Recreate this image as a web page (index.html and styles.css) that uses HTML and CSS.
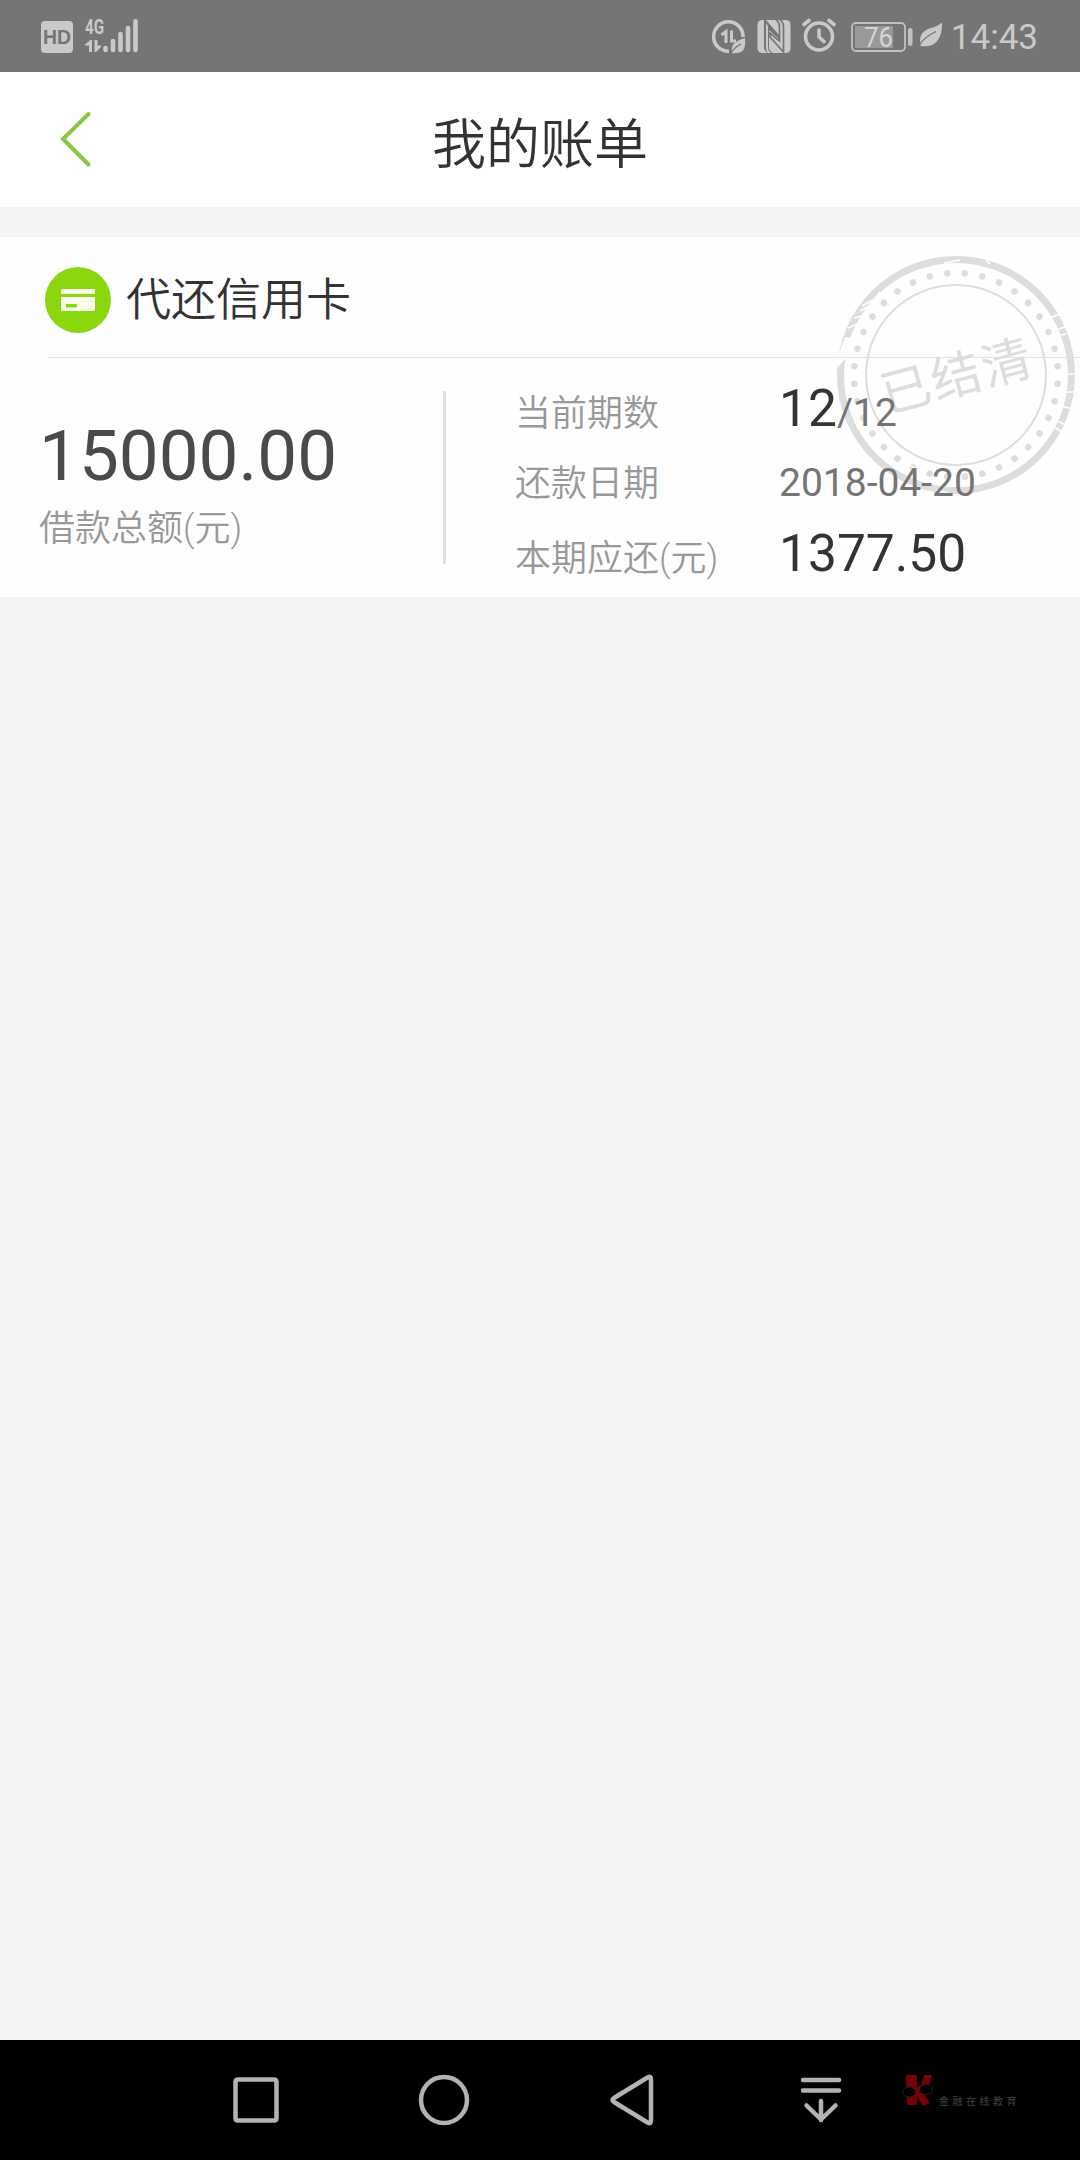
FILE: index.html
```html
<!DOCTYPE html>
<html lang="zh-CN">
<head>
  <meta charset="UTF-8">
  <meta name="viewport" content="width=device-width, initial-scale=1.0">
  <title>我的账单</title>
  <link rel="stylesheet" href="styles.css">
</head>
<body>
  <!-- 状态栏 -->
  <div class="status-bar">
    <div class="status-left">
      <svg class="icon-hd" width="32" height="32" viewBox="0 0 32 32">
        <rect width="32" height="32" rx="4" fill="#c9c9c9"/>
        <text x="16" y="23" text-anchor="middle" textLength="28" lengthAdjust="spacingAndGlyphs" class="hd-text">HD</text>
      </svg>
      <svg class="icon-signal" width="54" height="42" viewBox="0 -8 54 42">
        <text x="0" y="15" textLength="19" lengthAdjust="spacingAndGlyphs" class="net-text">4G</text>
        <path d="M4 33V26.500H0V25.500L5.500 21H7V33ZM9.500 21V33H11L16 28V26.500H12.500V21Z" fill="#c9c9c9"/>
        <path d="M20.500 29V31M28 22V31M35.500 15V31M43 9V31M50.500 2.300V31" stroke="#c9c9c9" stroke-width="4.600" stroke-linecap="round"/>
      </svg>
    </div>
    <div class="status-right">
      <svg class="icon-data" width="34" height="34" viewBox="0 0 34 34">
        <path d="M31 17A14.700 14.700 0 1 0 17 31.200" fill="none" stroke="#c9c9c9" stroke-width="3.600"/>
        <path d="M14 23V11.500L9.500 15M19.500 10.500V21H24" fill="none" stroke="#c9c9c9" stroke-width="3"/>
        <path d="M33 18C34 29 31 33 24 33L20.500 33.500C18 26 22 21 33 18Z" fill="#c9c9c9"/>
        <path d="M19 33C22 28 25 26 29 24" fill="none" stroke="#757575" stroke-width="1.300"/>
      </svg>
      <svg class="icon-nfc" width="34" height="34" viewBox="0 0 34 34">
        <rect x="0.500" width="33" height="33" rx="4.500" fill="#c9c9c9"/>
        <path d="M7 0H9L22 15V19L12 10V27Q12 31 16 33H11Q7 31 7 27Z" fill="#757575"/>
        <path d="M9 3L11 6V27Q11 31 14 33H11Q9 31 9 27Z" fill="#c9c9c9"/>
        <path d="M19 0Q22.500 2 22.500 7V21L13 13V17L26.500 32V7Q26.500 2 23 0" fill="none" stroke="#757575" stroke-width="1.700"/>
      </svg>
      <svg class="icon-alarm" width="34" height="34" viewBox="0 0 34 34">
        <circle cx="17" cy="18.500" r="13.500" fill="none" stroke="#c9c9c9" stroke-width="3.600"/>
        <path d="M2 6.500L7 2.500M32 6.500L27 2.500M17 12V19L22 23.500" fill="none" stroke="#c9c9c9" stroke-width="3.600" stroke-linecap="round"/>
      </svg>
      <svg class="icon-battery" width="62" height="30" viewBox="0 0 62 30">
        <rect x="1" y="1" width="53" height="28" rx="4" fill="none" stroke="#c0c0c0" stroke-width="1.800"/>
        <rect x="4" y="4" width="38" height="22" fill="#999"/>
        <rect x="57" y="6" width="4.500" height="18" rx="2" fill="#c0c0c0"/>
        <text x="27.500" y="24.500" text-anchor="middle" textLength="29" lengthAdjust="spacingAndGlyphs" class="battery-text">76</text>
      </svg>
      <svg class="icon-leaf" width="24" height="26" viewBox="0 0 24 26">
        <path d="M23 0.500C23.500 13 19 23 9 24C6 24.300 4 24 2 24.500C-1 14 4 8 12 6C17 4.700 20 3 23 0.500Z" fill="#c9c9c9"/>
        <path d="M1 22C5 16 10 13 17 9.500" fill="none" stroke="#757575" stroke-width="1.300"/>
      </svg>
      <span class="clock">14:43</span>
    </div>
  </div>

  <header class="header">
    <svg class="back" width="34" height="58" viewBox="0 0 34 58">
      <path d="M30.500 4L5 29L30.500 54.500" fill="none" stroke="#86c943" stroke-width="4" stroke-linecap="round"/>
    </svg>
    <h1>我的账单</h1>
  </header>

  <!-- 账单卡片 -->
  <main class="bill">
    <svg class="stamp" width="240" height="240" viewBox="0 0 240 240">
      <defs>
        <mask id="wear">
          <rect width="240" height="240" fill="#fff"/>
          <path d="M0 106L9 81L18 82L12 100L2 111Z" fill="#000"/>
          <path d="M12 72L26 66M18 62L32 58M24 55L40 46M26 50L46 39M38 44L44 36M54 30L58 35M108 7L124 4M150 4L154 8M92 35L98 34M52 70L60 54M180 44L186 48M196 60L202 70M202 69L208 84M214 62L224 58M220 74L232 70M222 80L230 78M210 138V150M228 118H240M228 136H240M226 150L236 153M221 165L230 169M219 172L227 176M182 196L200 178M205 172L202 160M22 192L36 204M24 202L34 212M172 230L182 222M176 232L190 220M68 208L88 215M100 234L112 237" fill="none" stroke="#000" stroke-width="1.700"/>
        </mask>
      </defs>
      <g mask="url(#wear)">
        <circle cx="120" cy="119" r="115.500" class="ring-outer"/>
        <circle cx="120" cy="119" r="102" class="ring-dots" pathLength="360"/>
        <circle cx="120" cy="119" r="90" class="ring-inner"/>
        <text x="121" y="138" text-anchor="middle" transform="rotate(-15 120 120)" class="stamp-text">已结清</text>
      </g>
    </svg>

    <div class="bill-head">
      <svg class="card-icon" width="66" height="66" viewBox="0 0 66 66">
        <circle cx="33" cy="33" r="33" fill="#8ad60f"/>
        <path d="M16 27V24Q16 22 18 22H48Q50 22 50 24V27ZM16 30H50V42Q50 44 48 44H18Q16 44 16 42Z" fill="#f7fde9"/>
        <rect x="21" y="37" width="11" height="3.500" fill="#8ad60f"/>
      </svg>
      <h2>代还信用卡</h2>
    </div>

    <div class="bill-body">
      <div class="total">
        <p class="amount">15000.00</p>
        <p class="label">借款总额(元)</p>
      </div>
      <dl class="detail">
        <dt>当前期数</dt>
        <dd class="strong">12<small>/12</small></dd>
        <dt>还款日期</dt>
        <dd>2018-04-20</dd>
        <dt>本期应还(元)</dt>
        <dd class="strong">1377.50</dd>
      </dl>
    </div>
  </main>

  <!-- 系统导航栏 -->
  <nav class="nav-bar">
    <svg width="52" height="52" viewBox="0 0 52 52"><rect x="5.500" y="5.500" width="41" height="41" rx="2"/></svg>
    <svg width="52" height="52" viewBox="0 0 52 52"><circle cx="26" cy="26" r="23"/></svg>
    <svg width="52" height="52" viewBox="0 0 52 52"><path d="M41.500 3.500Q45 1.500 45 5.500V46.500Q45 50.500 41.500 48.500L8 28Q5 26 8 24Z"/></svg>
    <svg width="52" height="52" viewBox="0 0 52 52"><path d="M9 6H45M9 16.500H45M27 27V46M12.500 31.500L27 45.500L41.500 31.500"/></svg>
    <div class="watermark">
      <svg class="watermark-logo" width="32" height="34" viewBox="0 0 32 34">
        <path d="M4 1H15V13L19 11L22 1H30L27 11L19 16L28 29L21 32L15 22V31H5V20L4 12Z" fill="#750006"/>
        <ellipse cx="7" cy="18" rx="6.500" ry="5" fill="#000" stroke="#202020"/>
        <ellipse cx="24" cy="15.500" rx="6.500" ry="5" fill="#000" stroke="#202020"/>
      </svg>
      <span>金融在线教育</span>
    </div>
  </nav>
</body>
</html>
```
FILE: styles.css
```css
* { margin: 0; padding: 0; box-sizing: border-box; }
body {
  width: 1080px;
  height: 2160px;
  display: flex;
  flex-direction: column;
  background: #f3f3f3;
  font-family: Roboto, "Noto Sans CJK SC", sans-serif;
  font-weight: 350;
  overflow: hidden;
}
svg { display: block; flex: none; }

.status-bar {
  height: 72px;
  padding: 0 42px 0 41px;
  display: flex;
  justify-content: space-between;
  background: #757575;
}
.status-left, .status-right { display: flex; align-items: flex-start; }
.icon-hd { margin-top: 21px; }
.icon-signal { margin: 11px 0 0 12px; }
.hd-text { font: bold 20px "Liberation Sans", sans-serif; fill: #757575; }
.net-text { font: bold 20px Roboto, sans-serif; fill: #c9c9c9; }
.icon-data { margin-top: 20px; }
.icon-nfc { margin: 20px 0 0 11px; }
.icon-alarm { margin: 18px 0 0 11px; }
.icon-battery { margin: 22px 0 0 15px; }
.battery-text { font: 400 27px Roboto, sans-serif; fill: #d4d4d4; }
.icon-leaf { margin: 22px 0 0 6px; }
.clock {
  margin-left: 8px;
  font-size: 35px;
  font-weight: 400;
  line-height: 76px;
  color: #c9c9c9;
}

.header {
  height: 135px;
  padding: 0 58px;
  display: grid;
  grid-template-columns: 34px 1fr 34px;
  align-items: center;
  background: #fff;
}
.back { margin-top: -2px; }
.header h1 {
  padding-top: 12px;
  font-size: 54px;
  font-weight: 350;
  line-height: 60px;
  text-align: center;
  color: #333;
}

.bill {
  position: relative;
  height: 360px;
  margin-top: 30px;
  background: #fefefe;
}
.bill-head {
  height: 121px;
  margin-left: 48px;
  display: flex;
  align-items: center;
  border-bottom: 1px solid #e2e2e2;
}
.card-icon { margin: 6px 15px 0 -3px; }
.bill-head h2 {
  margin-top: -2px;
  font-size: 45px;
  font-weight: 350;
  color: #333;
}
.bill-body { display: flex; position: relative; }
.total {
  width: 446px;
  height: 173px;
  margin-top: 33px;
  padding: 23px 0 0 39px;
  border-right: 3px solid #e0e0e0;
}
.amount {
  font-size: 71px;
  font-weight: 400;
  line-height: 84px;
  color: #4a4a4a;
}
.label {
  font-size: 36px;
  line-height: 62px;
  color: #999;
}
.detail {
  margin: 20px 0 0 69px;
  display: grid;
  grid-template-columns: 264px auto;
  grid-template-rows: 76px 69px 73px;
  align-items: baseline;
  font-size: 36px;
  color: #999;
}
.detail dd { font-size: 39px; font-weight: 400; color: #757575; }
.detail .strong { font-size: 51.500px; color: #333; }
.detail .strong small { font-size: 39px; color: #757575; }

/* 已结清印章 */
.stamp { position: absolute; top: 19px; right: 4px; }
.ring-outer { fill: none; stroke: #ddd; stroke-width: 7; }
.ring-inner { fill: none; stroke: #ddd; stroke-width: 2; }
.ring-dots {
  fill: none;
  stroke: #ddd;
  stroke-width: 6.600;
  stroke-linecap: round;
  stroke-dasharray: 0.01 9.990;
  stroke-dashoffset: 5;
}
.stamp-text {
  font-size: 50px;
  font-weight: 400;
  letter-spacing: 2px;
  fill: #ddd;
}

.nav-bar {
  height: 120px;
  margin-top: auto;
  padding-left: 230px;
  display: flex;
  align-items: center;
  gap: 136px;
  background: #000;
}
.nav-bar > svg {
  fill: none;
  stroke: #b3b3b3;
  stroke-width: 4.500;
  stroke-linecap: round;
  stroke-linejoin: round;
}
.watermark {
  margin: -18px 0 0 -80px;
  display: flex;
  align-items: flex-end;
  gap: 5px;
}
.watermark span {
  font-size: 10px;
  font-weight: 400;
  line-height: 12px;
  letter-spacing: 3.500px;
  color: #444;
  white-space: nowrap;
}
```
